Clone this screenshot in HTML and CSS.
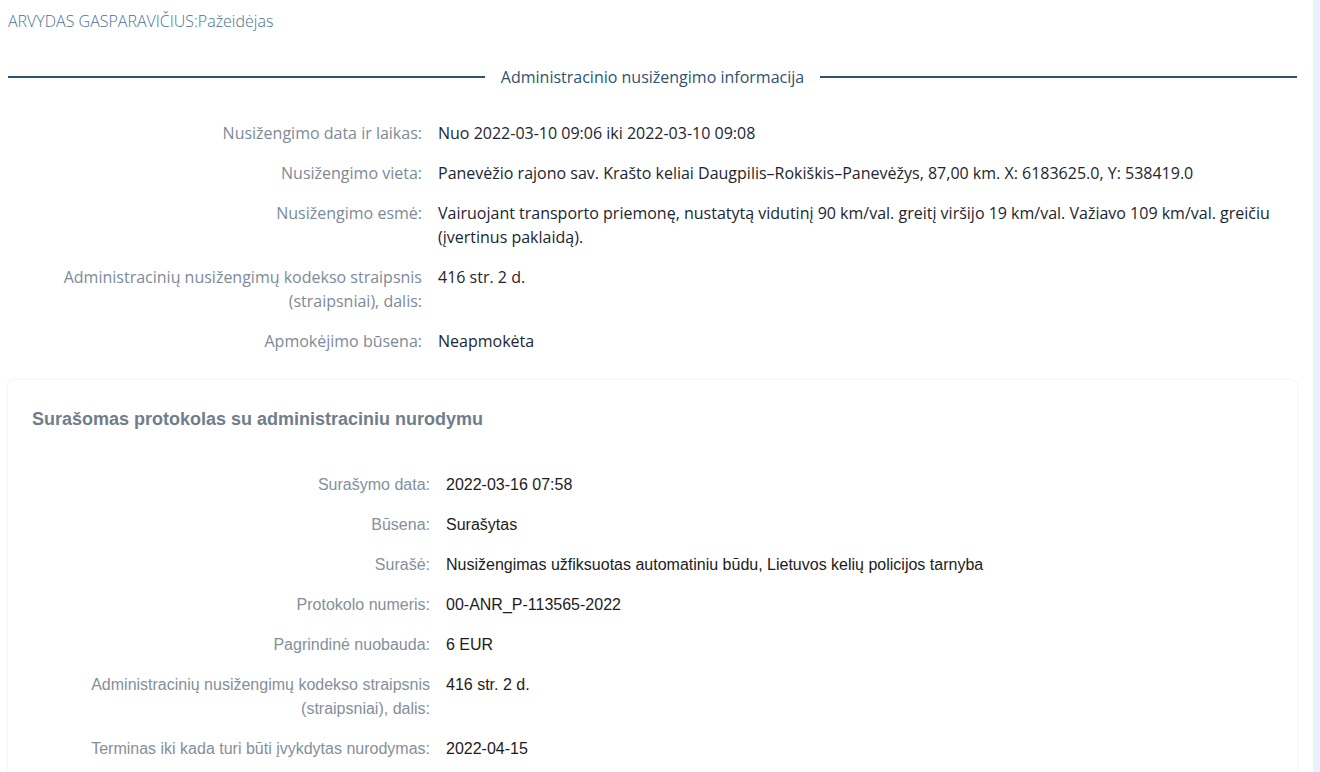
FILE: index.html
```html
<!DOCTYPE html>
<html lang="lt">
<head>
<meta charset="utf-8">
<title>Administracinio nusižengimo informacija</title>
<link rel="stylesheet" href="styles.css">
</head>
<body>
<div class="page">
  <main class="main">
    <div class="person">ARVYDAS GASPARAVIČIUS:Pažeidėjas</div>
    <div class="divider"><span class="divider-title">Administracinio nusižengimo informacija</span></div>
    <dl class="info">
      <div class="row"><dt>Nusižengimo data ir laikas:</dt><dd>Nuo 2022-03-10 09:06 iki 2022-03-10 09:08</dd></div>
      <div class="row"><dt>Nusižengimo vieta:</dt><dd>Panevėžio rajono sav. Krašto keliai Daugpilis–Rokiškis–Panevėžys, 87,00 km. X: 6183625.0, Y: 538419.0</dd></div>
      <div class="row"><dt>Nusižengimo esmė:</dt><dd>Vairuojant transporto priemonę, nustatytą vidutinį 90 km/val. greitį viršijo 19 km/val. Važiavo 109 km/val. greičiu (įvertinus paklaidą).</dd></div>
      <div class="row"><dt>Administracinių nusižengimų kodekso straipsnis (straipsniai), dalis:</dt><dd>416 str. 2 d.</dd></div>
      <div class="row"><dt>Apmokėjimo būsena:</dt><dd>Neapmokėta</dd></div>
    </dl>
    <section class="card">
      <h2 class="card-title">Surašomas protokolas su administraciniu nurodymu</h2>
      <dl class="info info-card">
        <div class="row"><dt>Surašymo data:</dt><dd>2022-03-16 07:58</dd></div>
        <div class="row"><dt>Būsena:</dt><dd>Surašytas</dd></div>
        <div class="row"><dt>Surašė:</dt><dd>Nusižengimas užfiksuotas automatiniu būdu, Lietuvos kelių policijos tarnyba</dd></div>
        <div class="row"><dt>Protokolo numeris:</dt><dd>00-ANR_P-113565-2022</dd></div>
        <div class="row"><dt>Pagrindinė nuobauda:</dt><dd>6 EUR</dd></div>
        <div class="row"><dt>Administracinių nusižengimų kodekso straipsnis (straipsniai), dalis:</dt><dd>416 str. 2 d.</dd></div>
        <div class="row"><dt>Terminas iki kada turi būti įvykdytas nurodymas:</dt><dd>2022-04-15</dd></div>
      </dl>
    </section>
  </main>
  <div class="side"></div>
</div>
</body>
</html>
```
FILE: styles.css
```css
html, body {
  margin: 0;
  padding: 0;
  height: 100%;
  overflow: hidden;
}
body {
  font-family: "Open Sans", "Noto Sans", sans-serif;
  background: #e8f4fc;
  color: #1d2530;
}
.page {
  display: flex;
  min-height: 100%;
}
.main {
  width: 1313px;
  box-sizing: border-box;
  background: #fff;
  padding: 10px 16px 0 8px;
}
.side {
  flex: 1;
  background: #e8f4fc;
}
.person {
  font-size: 16px;
  line-height: 22px;
  color: #4a7296;
  font-weight: 300;
}
.divider {
  display: flex;
  align-items: center;
  margin-top: 34px;
  height: 22px;
  gap: 16px;
}
.divider::before,
.divider::after {
  content: "";
  flex: 1;
  height: 2px;
  background: #2f5271;
}
.divider-title {
  font-size: 16px;
  color: #2f5271;
}
.info {
  margin: 33px 0 0;
  padding: 0;
}
.row {
  display: grid;
  grid-template-columns: 414px 1fr;
  column-gap: 16px;
  margin-bottom: 16px;
  font-size: 16px;
  line-height: 24px;
}
.row dt {
  text-align: right;
  color: #7d8a98;
}
.row dd {
  margin: 0;
  color: #1d2530;
}
.card {
  margin-top: 27px;
  background: #fff;
  border-radius: 6px;
  box-shadow: 0 0 3px rgba(0, 0, 0, 0.09);
  padding: 25px 24px 10px;
}
.card-title {
  margin: 0;
  font-family: "Liberation Sans", Arial, sans-serif;
  font-size: 18px;
  line-height: 28px;
  font-weight: 700;
  color: #717d8a;
}
.info-card {
  margin-top: 40px;
}
.info-card .row {
  font-family: "Liberation Sans", Arial, sans-serif;
  font-size: 16px;
  grid-template-columns: 398px 1fr;
  column-gap: 16px;
}
.info-card .row dt {
  color: #848f9c;
}
.info-card .row dd {
  color: #1c1c1c;
}
```
